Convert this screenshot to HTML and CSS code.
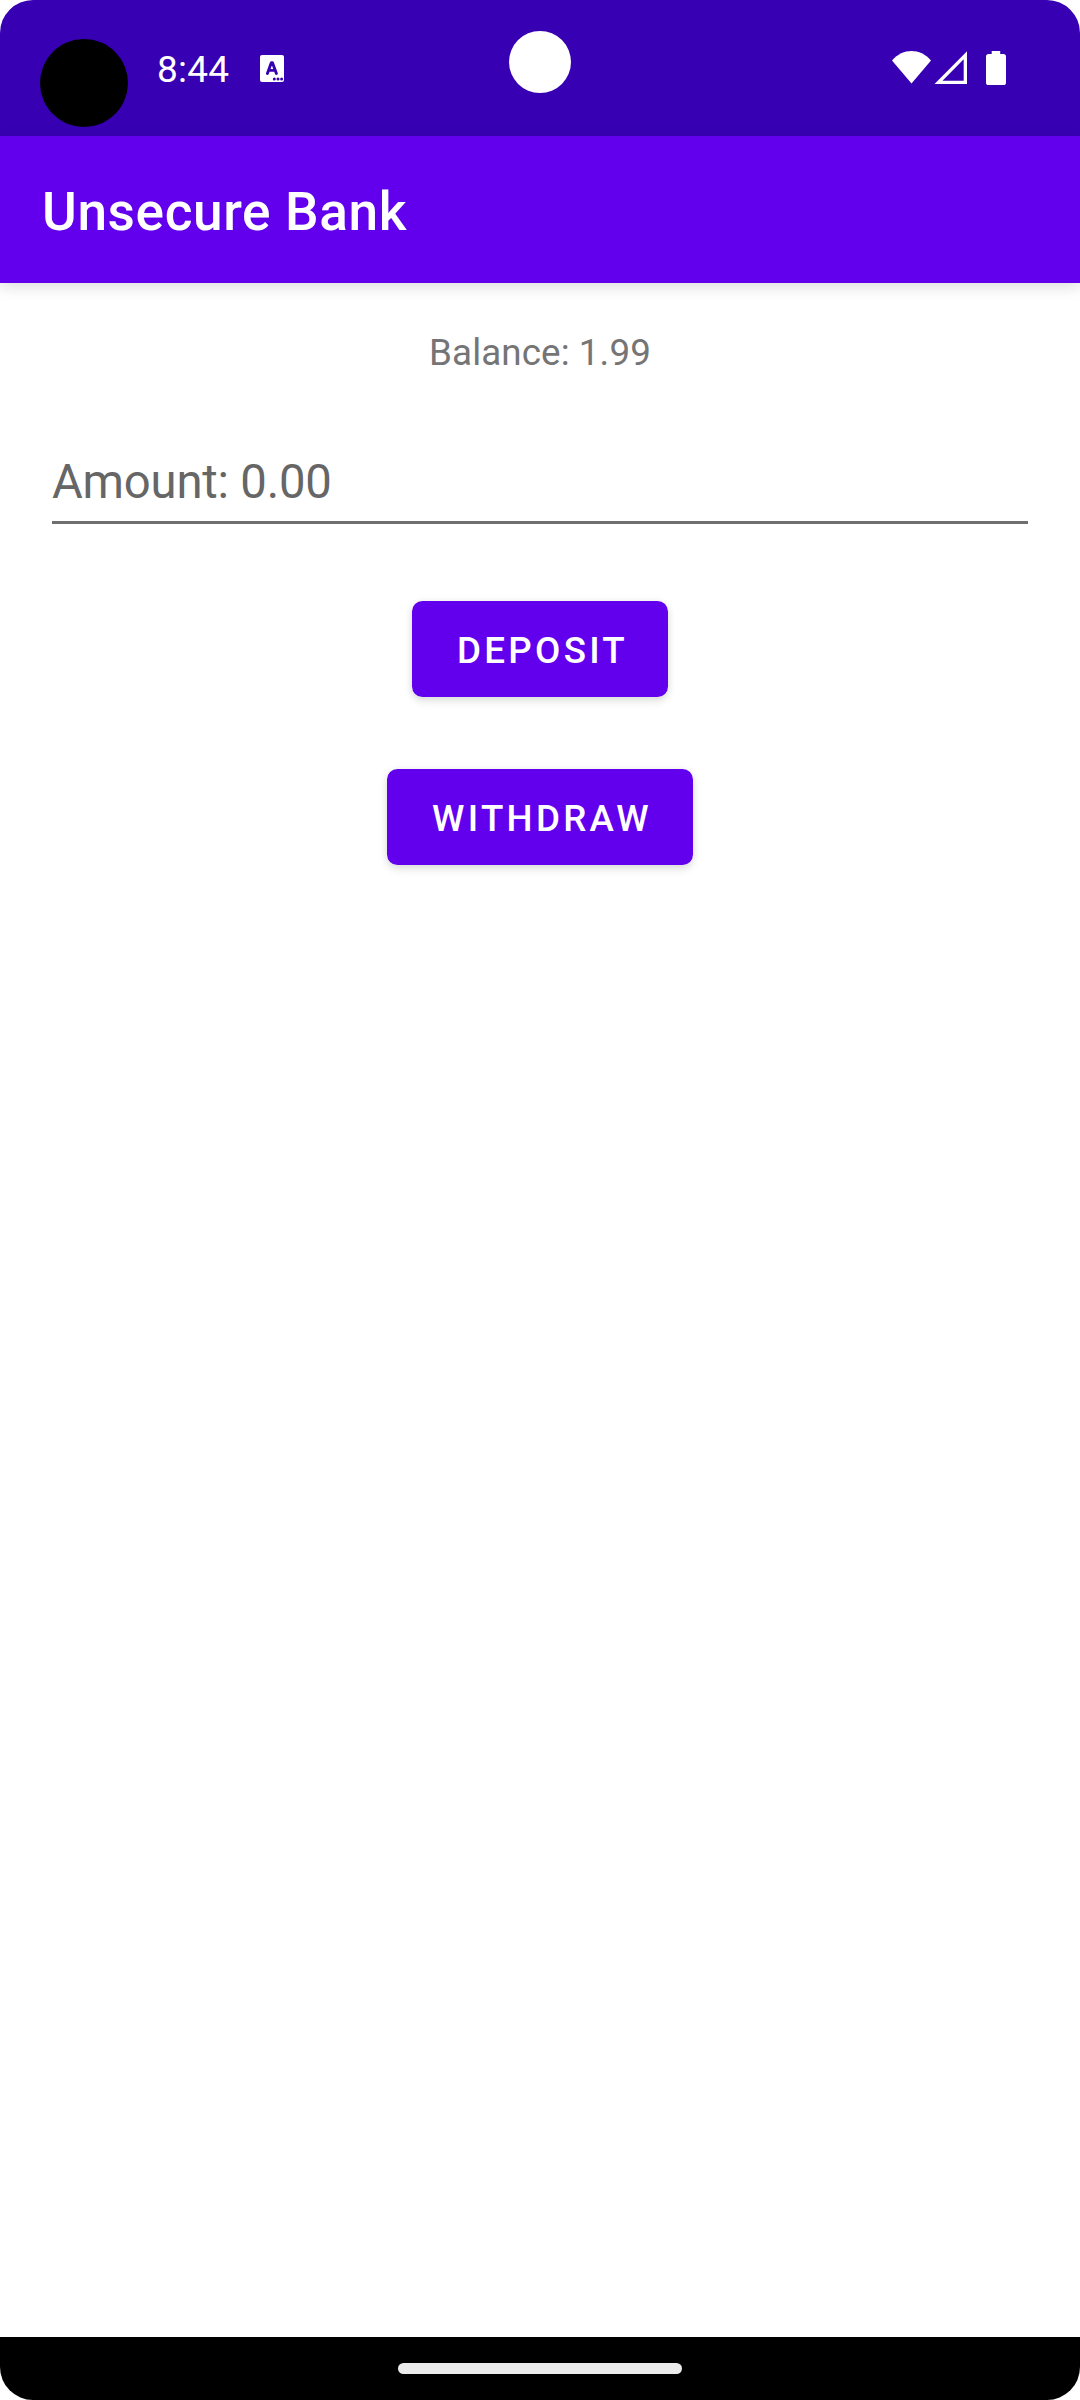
FILE: index.html
```html
<!DOCTYPE html>
<html lang="en">
<head>
<meta charset="utf-8">
<title>Unsecure Bank</title>
<link rel="stylesheet" href="styles.css">
</head>
<body>
<div class="screen">
  <header class="status-bar">
    <span class="clock">8:44</span>
    <svg class="notification" width="24" height="27" viewBox="0 0 24 27">
      <rect width="24" height="27" rx="2" fill="#fff"/>
      <path d="M7.4 18.5 11.4 7.6h1l4 10.9M9 15.4h6" fill="none" stroke="#3700b3" stroke-width="2.9" stroke-linecap="round" stroke-linejoin="round"/>
      <g fill="#3700b3"><circle cx="14.3" cy="24" r="1.5"/><circle cx="18" cy="24" r="1.5"/><circle cx="21.6" cy="24" r="1.5"/></g>
    </svg>
    <div class="system-icons">
      <svg width="120" height="40" viewBox="0 0 120 40">
        <g fill="#fff">
          <path d="M2 10.4C13-2.1 30-2.1 41 10.4L21.5 33.6Z"/>
          <path fill-rule="evenodd" d="M44.5 34 77 1.3V34ZM52.5 30.7H73.7V9.3Z"/>
          <path d="M101.7 1h8.5v3h3.2q2.6 0 2.6 2.6v25.8q0 2.6-2.6 2.6H98.6Q96 35 96 32.4V6.6Q96 4 98.6 4h3.1Z"/>
        </g>
      </svg>
    </div>
    <span class="privacy-dot"></span>
    <span class="camera"></span>
  </header>
  <div class="app-bar"><h1 class="title">Unsecure Bank</h1></div>
  <main class="content">
    <p class="balance">Balance: 1.99</p>
    <div class="amount">Amount: 0.00</div>
    <button class="button deposit">DEPOSIT</button>
    <button class="button withdraw">WITHDRAW</button>
  </main>
  <footer class="nav-bar"><span class="handle"></span></footer>
</div>
</body>
</html>
```
FILE: styles.css
```css
* { box-sizing: border-box; }
body { margin: 0; background: #fff; font-family: Roboto, sans-serif; }
.screen {
  display: flex;
  flex-direction: column;
  width: 1080px;
  height: 2400px;
  border-radius: 33px;
  overflow: hidden;
  background: #fff;
}
.status-bar {
  position: relative;
  display: flex;
  align-items: center;
  height: 136px;
  padding: 0 70px 0 157px;
  background: #3700b3;
  color: #fff;
}
.clock { width: 103px; padding-top: 4px; font-size: 37px; line-height: 44px; letter-spacing: .2px; }
.notification { display: block; }
.system-icons { margin-left: auto; height: 36px; }
.system-icons svg { display: block; }
.privacy-dot, .camera { position: absolute; border-radius: 50%; }
.privacy-dot { left: 40px; top: 39px; width: 88px; height: 88px; background: #000; }
.camera { left: 509px; top: 31px; width: 62px; height: 62px; background: #fff; }
.app-bar {
  position: relative;
  display: flex;
  align-items: center;
  height: 147px;
  padding: 4px 42px 0;
  background: #6200ee;
  color: #fff;
  box-shadow: 0 4px 14px rgba(0, 0, 0, .13);
}
.title { margin: 0; font-size: 53.2px; line-height: 62px; font-weight: 500; letter-spacing: .6px; }
.content {
  flex: 1;
  display: flex;
  flex-direction: column;
  align-items: center;
  padding: 48px 52px 0;
}
.balance { margin: 0; color: #757575; font-size: 36.75px; line-height: 44px; letter-spacing: .1px; }
.amount {
  width: 976px;
  height: 70px;
  margin-top: 79px;
  border-bottom: 3px solid #6f6f6f;
  color: #666;
  font-size: 47.25px;
  line-height: 56px;
  letter-spacing: -.2px;
}
.button {
  height: 96px;
  margin: 77px 0 0;
  padding: 3px 0 0 5px;
  border: 0;
  border-radius: 10.5px;
  background: #6200ee;
  color: #fff;
  font: 500 36.75px/44px Roboto, sans-serif;
  letter-spacing: 3.28px;
  box-shadow: 0 4px 8px rgba(0, 0, 0, .12), 0 0 8px rgba(0, 0, 0, .05);
}
.deposit { width: 256px; }
.withdraw { width: 306px; margin-top: 72px; padding-left: 4px; }
.nav-bar { display: flex; justify-content: center; height: 63px; padding-top: 26px; background: #000; }
.handle { width: 284px; height: 11px; border-radius: 6px; background: #ebebeb; }
```
